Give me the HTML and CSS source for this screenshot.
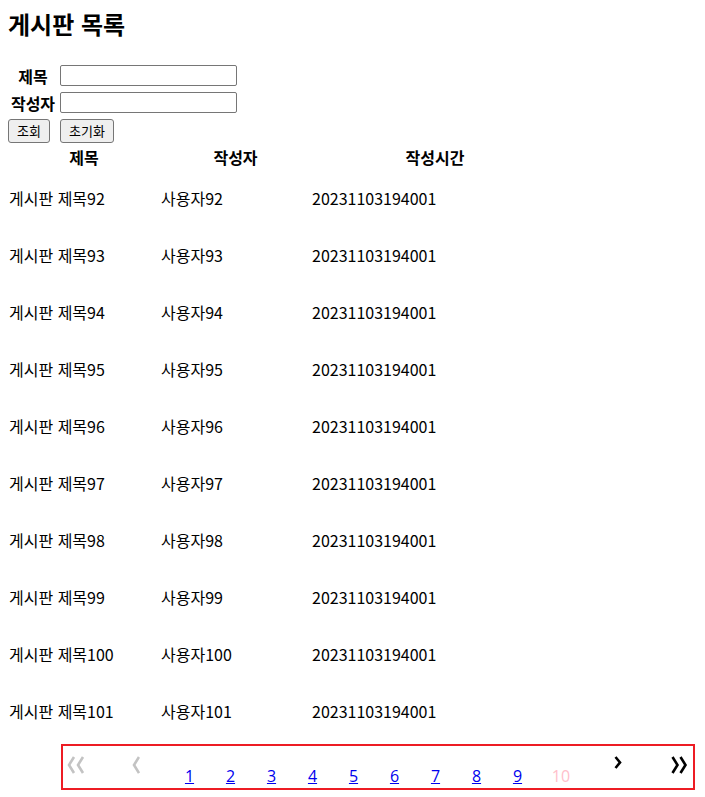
FILE: index.html
```html
<!DOCTYPE html>
<html lang="ko">
<head>
    <meta charset="UTF-8">
    <meta name="viewport" content="width=device-width, initial-scale=1.0">
    <title>게시판 목록</title>
    <link rel="stylesheet" href="styles.css">
</head>
<body>

<h2 class="title">게시판 목록</h2>

<form class="search" onsubmit="return false;">
    <label class="search-label" for="searchTitle">제목</label>
    <input type="text" id="searchTitle">
    <label class="search-label" for="searchWriter">작성자</label>
    <input type="text" id="searchWriter">
    <div><button type="submit">조회</button></div>
    <div><button type="reset">초기화</button></div>
</form>

<table class="board">
    <thead>
        <tr>
            <th class="col-title">제목</th>
            <th class="col-writer">작성자</th>
            <th class="col-time">작성시간</th>
        </tr>
    </thead>
    <tbody id="boardBody"></tbody>
</table>

<div class="pager">
    <span class="pg-arrow pg-first off">
        <svg width="18" height="18" viewBox="0 0 18 18"><polyline points="7,1 2,9 7,17"/><polyline points="16,1 11,9 16,17"/></svg>
    </span>
    <span class="pg-arrow pg-prev off">
        <svg width="8" height="18" viewBox="0 0 8 18"><polyline points="7,1 2,9 7,17"/></svg>
    </span>
    <div class="pg-nums" id="pageNums"></div>
    <span class="pg-arrow pg-next">
        <svg width="8" height="13" viewBox="0 0 8 13"><polyline points="1.5,1 6,6.5 1.5,12"/></svg>
    </span>
    <span class="pg-arrow pg-last">
        <svg width="17" height="18" viewBox="0 0 17 18"><polyline points="1.5,1 6.5,9 1.5,17"/><polyline points="9.5,1 14.5,9 9.5,17"/></svg>
    </span>
</div>

<script>
    const body = document.getElementById('boardBody');
    for (let i = 92; i <= 101; i++) {
        const tr = document.createElement('tr');
        tr.innerHTML = '<td>게시판 제목' + i + '</td><td>사용자' + i + '</td><td>20231103194001</td>';
        body.appendChild(tr);
    }

    const nums = document.getElementById('pageNums');
    for (let p = 1; p <= 10; p++) {
        if (p === 10) {
            const span = document.createElement('span');
            span.className = 'pg-num current';
            span.textContent = p;
            nums.appendChild(span);
        } else {
            const a = document.createElement('a');
            a.className = 'pg-num';
            a.href = '#';
            a.textContent = p;
            nums.appendChild(a);
        }
    }
</script>

</body>
</html>
```
FILE: styles.css
```css
body {
    margin: 8px;
    font-family: "Noto Sans CJK KR", "Noto Sans", sans-serif;
    font-size: 16px;
    color: #000;
    background: #fff;
}
.title {
    margin: 0 0 23px;
    font-size: 24px;
    line-height: 32px;
    font-weight: bold;
}
.search {
    display: grid;
    grid-template-columns: 50px auto;
    grid-auto-rows: 25px;
    column-gap: 2px;
    row-gap: 2px;
    align-items: center;
    justify-content: start;
}
.search-label {
    font-weight: bold;
    text-align: center;
    line-height: 20px;
}
.search input[type="text"] {
    box-sizing: border-box;
    width: 177px;
    height: 21px;
    margin: 0;
    padding: 1px 2px;
    border: 1px solid #767676;
    border-radius: 2px;
    font-family: inherit;
    font-size: 13px;
}
.search button {
    box-sizing: border-box;
    height: 24px;
    margin: 0;
    padding: 0 8px;
    border: 1px solid #767676;
    border-radius: 3px;
    background: #efefef;
    font-family: inherit;
    font-size: 13px;
    line-height: 20px;
    color: #000;
}
.board {
    margin-top: 3px;
    border-collapse: collapse;
}
.board th {
    height: 24px;
    padding: 0 1px;
    font-weight: bold;
    line-height: 20px;
    text-align: center;
}
.board td {
    height: 57px;
    padding: 0 1px;
    line-height: 20px;
    vertical-align: middle;
    text-align: left;
}
.col-title { width: 150px; }
.col-writer { width: 149px; }
.col-time { width: 246px; }
.pager {
    box-sizing: border-box;
    display: flex;
    align-items: flex-start;
    width: 634px;
    height: 46px;
    margin: 5px 0 0 53px;
    border: 2px solid #ed1c24;
}
.pg-arrow {
    display: flex;
    margin-top: 10px;
}
.pg-arrow polyline {
    fill: none;
    stroke-width: 2.6;
    stroke-linecap: butt;
    stroke-linejoin: miter;
}
.pg-arrow.off polyline { stroke: #c3c3c3; }
.pg-next polyline, .pg-last polyline { stroke: #000; }
.pg-first { margin-left: 4px; }
.pg-prev { margin-left: 47px; }
.pg-nums {
    display: flex;
    margin-left: 29px;
    margin-top: 20px;
}
.pg-num {
    width: 41px;
    text-align: center;
    font-family: "Open Sans", "Noto Sans", sans-serif;
    font-size: 16px;
    line-height: 20px;
}
a.pg-num { color: #0000ee; }
.pg-num.current {
    color: #ffc0cb;
    padding-left: 5px;
    box-sizing: border-box;
}
.pg-next { margin-left: 35px; }
.pg-last { margin-left: 49px; }
```
